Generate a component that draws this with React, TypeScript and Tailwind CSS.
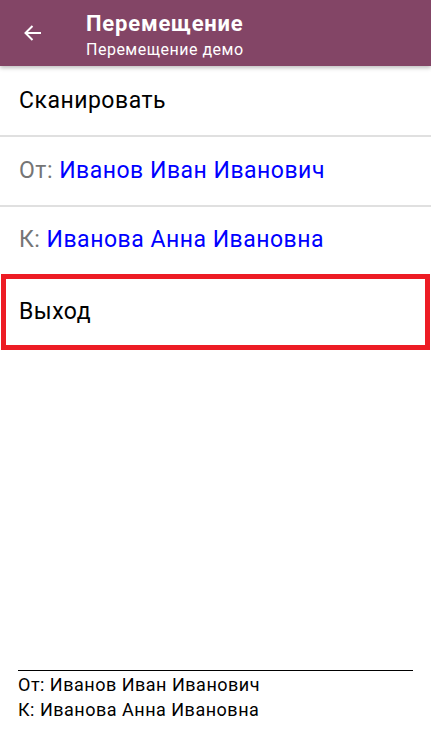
import React from "react";

export default function App() {
  return (
    <div
      className="w-[431px] h-[739px] bg-white flex flex-col relative overflow-hidden"
      style={{ fontFamily: "Roboto, 'Noto Sans', sans-serif" }}
    >
      <div className="h-[66px] bg-[#834566] flex items-center shrink-0 shadow-[0_2px_4px_rgba(0,0,0,0.25)] z-10">
        <div className="w-[86px] flex items-center pl-[21px]">
          <svg width="24" height="24" viewBox="0 0 24 24" fill="none">
            <path d="M20 12H4.5M11.5 5l-7 7 7 7" stroke="white" strokeWidth="2" />
          </svg>
        </div>
        <div className="flex flex-col">
          <div className="text-white font-bold text-[22px] tracking-[0.8px] leading-[26px] mt-[4px]">Перемещение</div>
          <div className="text-white text-[16px] tracking-[0.5px] leading-[20px] mt-[3px]">Перемещение демо</div>
        </div>
      </div>
      <div className="h-[69px] flex items-center px-[19px] pt-[2px] text-[23px] tracking-[0.5px] text-black">Сканировать</div>
      <div className="h-[2px] bg-[#e0e0e0]" />
      <div className="h-[68px] flex items-center px-[19px] text-[23px] tracking-[0.5px]">
        <span className="text-[#757575]">От:&nbsp;</span>
        <span className="text-[#0000ff]">Иванов Иван Иванович</span>
      </div>
      <div className="h-[2px] bg-[#e0e0e0]" />
      <div className="h-[67px] flex items-center px-[19px] text-[23px] tracking-[0.5px]">
        <span className="text-[#757575]">К:&nbsp;</span>
        <span className="text-[#0000ff]">Иванова Анна Ивановна</span>
      </div>
      <div className="h-[76px] mx-[1px] border-[5px] border-[#ed1c24] flex items-center px-[13px] text-[23px] tracking-[0.5px] text-black">
        Выход
      </div>
      <div className="flex-1" />
      <div className="mx-[18px] border-t border-black pt-[1px] pb-[17px] text-[18px] tracking-[0.5px] leading-[25px] text-black">
        <div>От: Иванов Иван Иванович</div>
        <div>К: Иванова Анна Ивановна</div>
      </div>
    </div>
  );
}
